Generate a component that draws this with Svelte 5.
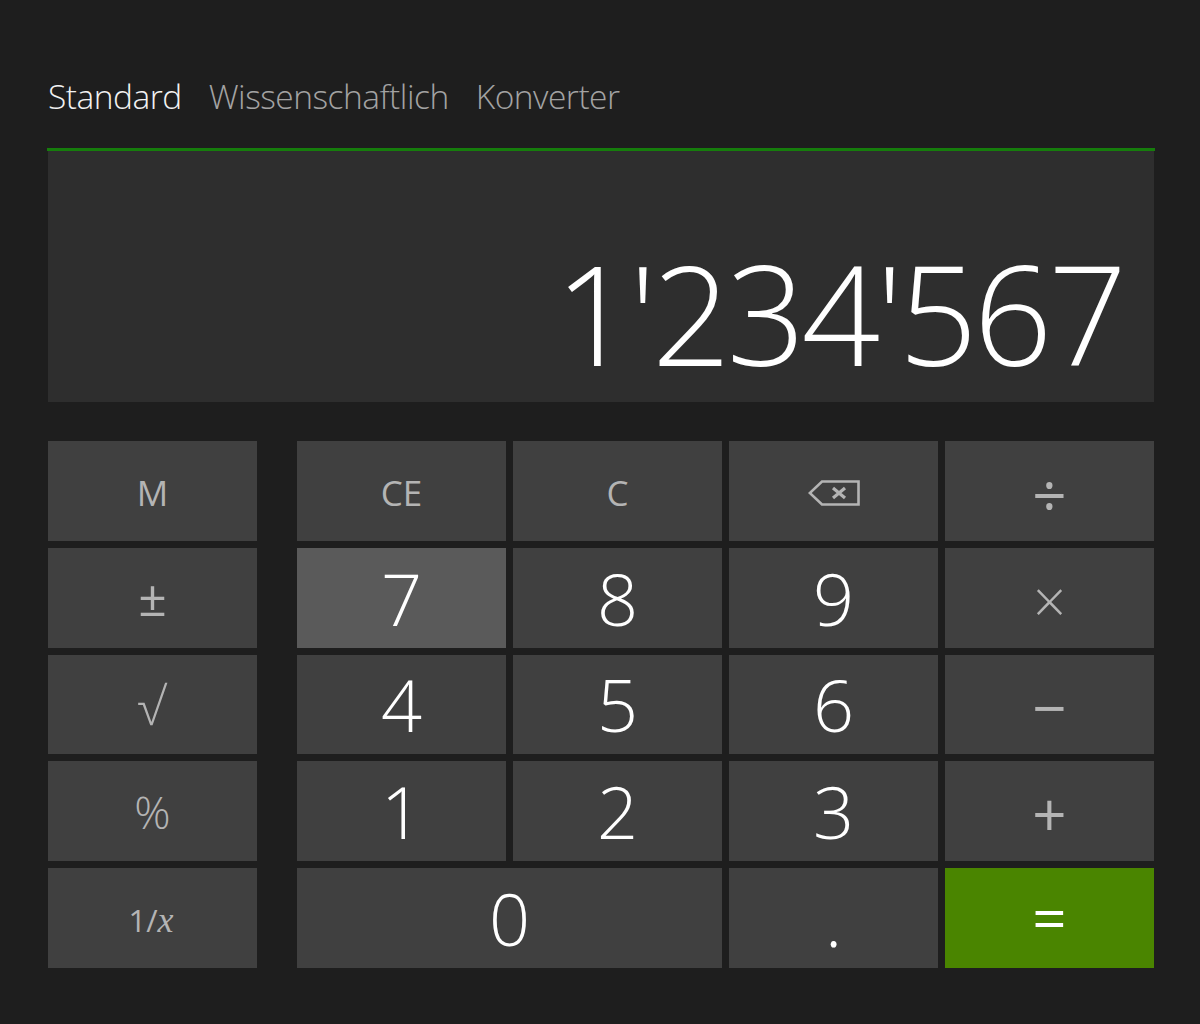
<script>
  const tabs = ['Standard', 'Wissenschaftlich', 'Konverter'];

  const side = [
    { label: 'M', cls: 'fn' },
    { label: '±', cls: 'fn pm' },
    { label: '√', cls: 'fn root' },
    { label: '%', cls: 'fn pct' }
  ];

  const keys = [
    { label: 'CE', cls: 'fn' },
    { label: 'C', cls: 'fn' },
    { icon: 'back', cls: 'fn' },
    { label: '÷', cls: 'op' },
    { label: '7', cls: 'num active' },
    { label: '8', cls: 'num' },
    { label: '9', cls: 'num' },
    { label: '×', cls: 'op times' },
    { label: '4', cls: 'num' },
    { label: '5', cls: 'num' },
    { label: '6', cls: 'num' },
    { label: '−', cls: 'op' },
    { label: '1', cls: 'num' },
    { label: '2', cls: 'num' },
    { label: '3', cls: 'num' },
    { label: '+', cls: 'op' },
    { label: '0', cls: 'num wide' },
    { label: '.', cls: 'num dot' },
    { label: '=', cls: 'op equals' }
  ];
</script>

<main class="calc">
  <nav class="tabs">
    {#each tabs as tab, i}
      <span class="tab" class:current={i === 0}>{tab}</span>
    {/each}
  </nav>

  <div class="rule"></div>
  <div class="display">1'234'567</div>

  <div class="pad">
    <div class="side">
      {#each side as key}
        <button class={key.cls}>{key.label}</button>
      {/each}
      <button class="fn inverse">1/<i>x</i></button>
    </div>

    <div class="keys">
      {#each keys as key}
        <button class={key.cls}>
          {#if key.icon === 'back'}
            <svg width="52" height="28" viewBox="0 0 52 28" fill="none" stroke="#b4b4b4" stroke-width="2.6">
              <path d="M50.5 2.5H14L1.8 14 14 25.5h36.5z" />
              <path d="M25 9l12 10M37 9L25 19" stroke-width="3.2" />
            </svg>
          {:else}
            {key.label}
          {/if}
        </button>
      {/each}
    </div>
  </div>
</main>

<style>
  :global(body) {
    background: #1e1e1e;
  }

  .calc {
    padding: 69px 46px 0 48px;
    font-family: 'Open Sans', 'Noto Sans', sans-serif;
    font-weight: 300;
  }

  .tabs {
    display: flex;
    gap: 27px;
    height: 79px;
    font-size: 33.5px;
    line-height: 54px;
    letter-spacing: -0.5px;
    color: #a3a3a3;
  }

  .current {
    color: #f2f2f2;
  }

  .rule {
    height: 3px;
    margin: 0 -1px;
    background: #167d0c;
  }

  .display {
    height: 251px;
    box-sizing: border-box;
    background: #2e2e2e;
    padding: 66px 31px 0 0;
    text-align: right;
    font-size: 138px;
    line-height: 190px;
    letter-spacing: -4px;
    color: #fff;
  }

  .pad {
    display: flex;
    gap: 40px;
    margin-top: 39px;
    height: 527px;
  }

  .side {
    display: grid;
    grid-template-rows: repeat(5, minmax(0, 1fr));
    gap: 7px;
    width: 209px;
  }

  .keys {
    flex: 1;
    display: grid;
    grid-template-columns: repeat(4, minmax(0, 1fr));
    grid-template-rows: repeat(5, minmax(0, 1fr));
    gap: 7px;
  }

  button {
    display: flex;
    align-items: center;
    justify-content: center;
    border: 0;
    padding: 0;
    background: #404040;
    font-family: inherit;
    font-weight: 300;
    color: #fff;
  }

  .fn {
    font-size: 35px;
    font-weight: 400;
    color: #b4b4b4;
    padding-top: 4px;
  }

  .pm {
    font-size: 50px;
    padding: 0 0 2px;
  }

  .root {
    font-size: 52px;
    font-weight: 300;
    padding: 0 2px 0 0;
  }

  .pct {
    font-size: 45px;
    font-weight: 300;
    padding: 1px 0 0;
  }

  .op {
    font-size: 60px;
    font-weight: 400;
    color: #b4b4b4;
    padding-top: 6px;
  }

  .times {
    font-size: 58px;
    font-weight: 300;
  }

  .num {
    font-size: 72px;
  }

  .active {
    background: #5a5a5a;
  }

  .wide {
    grid-column: span 2;
  }

  .dot {
    padding-top: 2px;
  }

  .equals {
    background: #4a8500;
    color: #fff;
    padding: 0 0 3px;
  }

  .inverse {
    font-size: 31px;
    padding: 3px 3px 0 0;
  }

  .inverse i {
    font-family: 'Liberation Serif', serif;
    font-size: 36px;
  }
</style>
